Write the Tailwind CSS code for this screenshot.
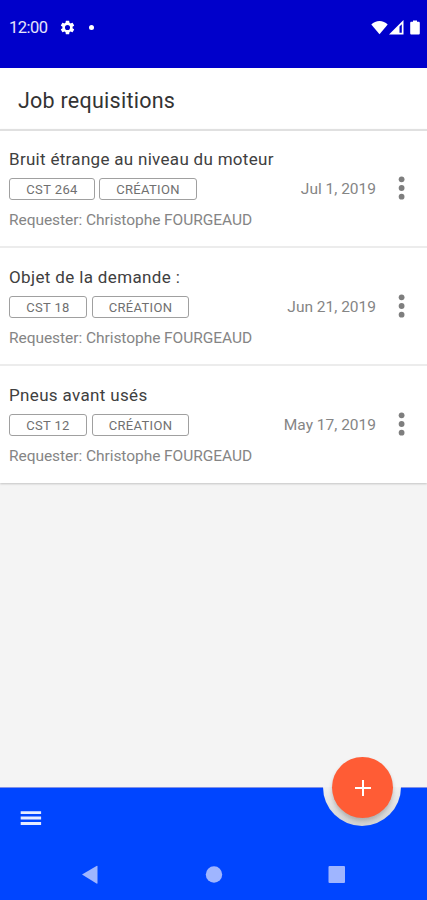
<!DOCTYPE html>
<html lang="en">
<head>
    <meta charset="UTF-8">
    <meta name="viewport" content="width=device-width, initial-scale=1.0">
    <title>Job requisitions</title>
    <script src="https://cdn.jsdelivr.net/npm/@tailwindcss/browser@4"></script>
</head>
<body class="bg-[#f4f4f4] font-['Roboto',sans-serif]">
    <div class="relative flex flex-col h-[900px] w-[427px] overflow-hidden">
        <!-- Status bar -->
        <div class="flex items-start justify-between h-[67.5px] shrink-0 bg-[#0000cb] pl-[9px] pr-[7px] pt-[17px] text-white">
            <div class="flex items-center h-5">
                <span class="w-[50px] pt-[2px] text-[16.5px] tracking-[-0.5px] text-white/90">12:00</span>
                <svg class="size-[17px]" viewBox="0 0 24 24" fill="currentColor"><path d="M19.14 12.94c.04-.3.06-.61.06-.94 0-.32-.02-.64-.07-.94l2.03-1.58a.49.49 0 0 0 .12-.61l-1.92-3.32a.488.488 0 0 0-.59-.22l-2.39.96c-.5-.38-1.03-.7-1.62-.94l-.36-2.54a.484.484 0 0 0-.48-.41h-3.84c-.24 0-.43.17-.47.41l-.36 2.54c-.59.24-1.13.57-1.62.94l-2.39-.96c-.22-.08-.47 0-.59.22L2.74 8.87c-.12.21-.08.47.12.61l2.03 1.58c-.05.3-.09.63-.09.94s.02.64.07.94l-2.03 1.58a.49.49 0 0 0-.12.61l1.92 3.32c.12.22.37.29.59.22l2.39-.96c.5.38 1.03.7 1.62.94l.36 2.54c.05.24.24.41.48.41h3.84c.24 0 .44-.17.47-.41l.36-2.54c.59-.24 1.13-.56 1.62-.94l2.39.96c.22.08.47 0 .59-.22l1.92-3.32c.12-.22.07-.47-.12-.61l-2.01-1.58zM12 15.6A3.6 3.6 0 1 1 12 8.4a3.6 3.6 0 0 1 0 7.2z"/></svg>
                <span class="ml-[12.5px] size-[5px] rounded-full bg-white"></span>
            </div>
            <div class="flex items-center h-5">
                <svg class="h-[15px] w-[17px]" viewBox="0 0 17 15" fill="currentColor"><path d="M8.5 14.3.3 4.5C2.5 2.2 5.4.9 8.5.9s6 1.3 8.2 3.6z"/></svg>
                <svg class="ml-px h-[15px] w-[15px]" viewBox="0 0 15 15"><path d="M0 14.5 14.5 0v14.5z" fill="currentColor"/><path d="M10.5 6.5 12.8 4.2v8.5h-2.3z" fill="#0000cb"/></svg>
                <svg class="ml-[6px] h-[15px] w-[10px]" viewBox="0 0 10 15" fill="currentColor"><path d="M3 .5h4v1.3h1.5c.8 0 1.3.5 1.3 1.3v10.1c0 .8-.5 1.3-1.3 1.3h-7c-.8 0-1.3-.5-1.3-1.3V3.1c0-.8.5-1.3 1.3-1.3H3z"/></svg>
            </div>
        </div>

        <!-- Title -->
        <div class="flex items-center h-[61.5px] shrink-0 bg-white pl-[18px] pt-[5px]">
            <h1 class="text-[21.5px] tracking-[0.25px] text-[#333]">Job requisitions</h1>
        </div>

        <!-- Requisition list -->
        <ul class="shrink-0 border-t-2 border-[#e0e0e0] bg-white shadow-[0_1px_2px_rgba(0,0,0,0.2)]">
            <li class="h-[117px] border-b-2 border-[#ececec] px-[9px] pt-[16px]">
                <h2 class="text-[17px] leading-6 tracking-[0.3px] text-[#404040]">Bruit étrange au niveau du moteur</h2>
                <div class="mt-[7px] flex items-center h-[22px] text-[13px] text-[#707070]">
                    <span class="flex items-center justify-center h-[22px] w-[86px] rounded-[3px] border border-[#a0a0a0] pt-px tracking-[0.4px]">CST 264</span>
                    <span class="ml-1 flex items-center justify-center h-[22px] w-[98px] rounded-[3px] border border-[#a0a0a0] pt-px tracking-[0.3px]">CRÉATION</span>
                    <span class="ml-auto pt-[2px] text-[15.5px] text-[#858585]">Jul 1, 2019</span>
                    <svg class="ml-[18px] mr-[8px] h-6 w-4 -mt-[2px]" viewBox="0 0 16 24" fill="#7e7e7e"><circle cx="7.600" cy="3.3" r="2.9"/><circle cx="7.600" cy="12" r="2.9"/><circle cx="7.600" cy="20.7" r="2.9"/></svg>
                </div>
                <p class="mt-[8px] text-[15.5px] leading-6 tracking-[-0.05px] text-[#858585]">Requester: Christophe FOURGEAUD</p>
            </li>
            <li class="h-[118px] border-b-2 border-[#ececec] px-[9px] pt-[17px]">
                <h2 class="text-[17px] leading-6 tracking-[0.36px] text-[#404040]">Objet de la demande :</h2>
                <div class="mt-[7px] flex items-center h-[22px] text-[13px] text-[#707070]">
                    <span class="flex items-center justify-center h-[22px] w-[78px] rounded-[3px] border border-[#a0a0a0] pt-px tracking-[0.3px]">CST 18</span>
                    <span class="ml-[5px] flex items-center justify-center h-[22px] w-[97px] rounded-[3px] border border-[#a0a0a0] pt-px tracking-[0.3px]">CRÉATION</span>
                    <span class="ml-auto pt-[2px] text-[15.5px] text-[#858585]">Jun 21, 2019</span>
                    <svg class="ml-[18px] mr-[8px] h-6 w-4 -mt-[2px]" viewBox="0 0 16 24" fill="#7e7e7e"><circle cx="7.600" cy="3.3" r="2.9"/><circle cx="7.600" cy="12" r="2.9"/><circle cx="7.600" cy="20.7" r="2.9"/></svg>
                </div>
                <p class="mt-[8px] text-[15.5px] leading-6 tracking-[-0.05px] text-[#858585]">Requester: Christophe FOURGEAUD</p>
            </li>
            <li class="h-[117px] px-[9px] pt-[17px]">
                <h2 class="text-[17px] leading-6 tracking-[0.34px] text-[#404040]">Pneus avant usés</h2>
                <div class="mt-[7px] flex items-center h-[22px] text-[13px] text-[#707070]">
                    <span class="flex items-center justify-center h-[22px] w-[78px] rounded-[3px] border border-[#a0a0a0] pt-px tracking-[0.3px]">CST 12</span>
                    <span class="ml-[5px] flex items-center justify-center h-[22px] w-[97px] rounded-[3px] border border-[#a0a0a0] pt-px tracking-[0.3px]">CRÉATION</span>
                    <span class="ml-auto pt-[2px] text-[15.5px] text-[#858585]">May 17, 2019</span>
                    <svg class="ml-[18px] mr-[8px] h-6 w-4 -mt-[2px]" viewBox="0 0 16 24" fill="#7e7e7e"><circle cx="7.600" cy="3.3" r="2.9"/><circle cx="7.600" cy="12" r="2.9"/><circle cx="7.600" cy="20.7" r="2.9"/></svg>
                </div>
                <p class="mt-[8px] text-[15.5px] leading-6 tracking-[-0.05px] text-[#858585]">Requester: Christophe FOURGEAUD</p>
            </li>
        </ul>

        <!-- Bottom app bar -->
        <div class="relative mt-auto h-[113px] shrink-0 border-t border-[#8090e8] bg-[#0045ff]">
            <button class="ml-[20px] mt-[22px] block h-[18px] w-[22px]" aria-label="Menu">
                <svg class="h-[18px] w-[22px]" viewBox="0 0 22 18" fill="#e6ebff"><path d="M.7 1.2h20.4v2.900H.7zM.7 6.6h20.4v2.900H.7zM.7 12h20.4v2.900H.7z"/></svg>
            </button>

            <!-- Cradle cut-out and floating button -->
            <div class="absolute left-[323px] -top-px h-[39px] w-[78px] rounded-b-full bg-linear-to-b from-[#f0f0f0] to-[#d2d2d2]"></div>
            <button class="absolute left-[332px] top-[-31px] flex items-center justify-center size-[61px] rounded-full bg-[#ff5c35] shadow-[0_3px_4px_rgba(0,0,0,0.2)]" aria-label="Add">
                <svg class="size-4" viewBox="0 0 16 16" stroke="#fff" stroke-width="2"><path d="M8 0v16M0 8h16"/></svg>
            </button>

            <!-- System navigation -->
            <svg class="absolute left-0 bottom-0 h-[52px] w-[427px]" viewBox="0 0 427 52" fill="#9fb5ff">
                <path d="M82 26.5 96.5 18q1-.5 1 .5v16.500q0 1-1 .5z"/>
                <circle cx="214" cy="26.5" r="8.2"/>
                <rect x="328.5" y="18" width="16.5" height="17" rx="1"/>
            </svg>
        </div>
    </div>
</body>
</html>
